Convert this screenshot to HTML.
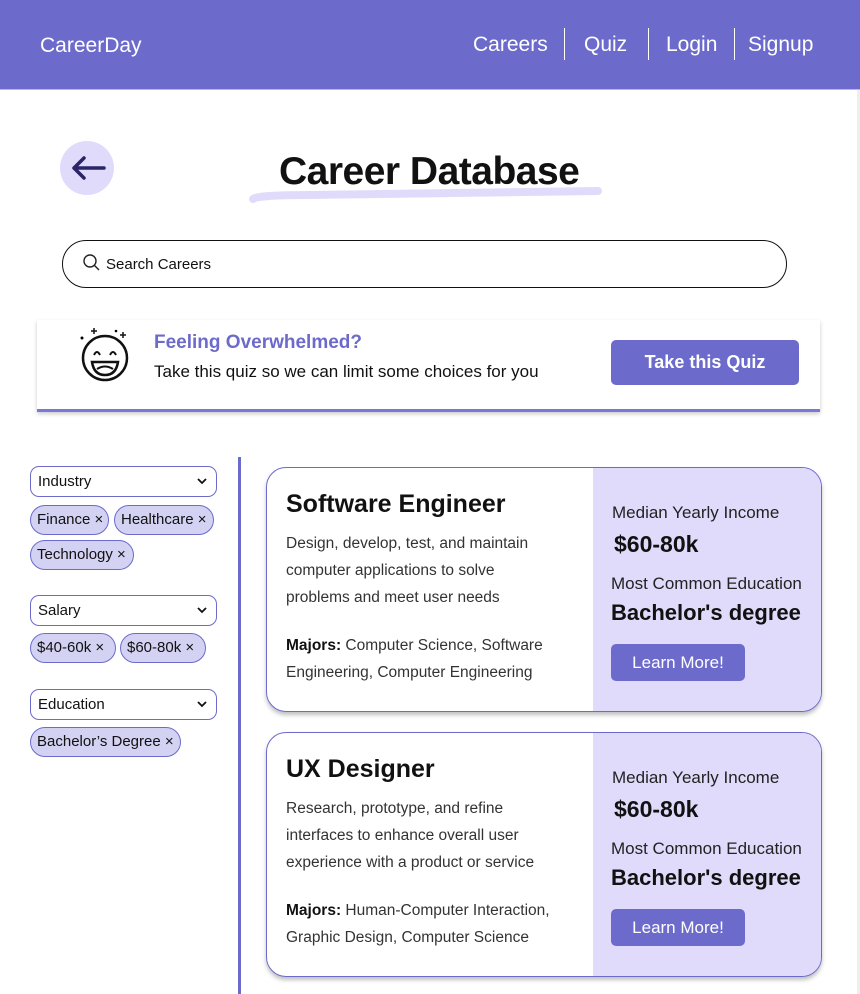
<!DOCTYPE html>
<html><head><meta charset="utf-8"><style>
*{box-sizing:border-box;margin:0;padding:0}
body{width:860px;height:994px;overflow:hidden;background:#fff;font-family:"Liberation Sans",sans-serif;position:relative;color:#111}
.a{position:absolute}
.hdr{left:0;top:0;width:860px;height:90px;background:#6c6bcc;border-bottom:1px solid #b9b6ee}
.nav{color:#fff;font-size:21px;top:33px}
.sep{top:28px;width:1px;height:32px;background:#fff}
.sel{left:30px;width:187px;height:31px;border:1.5px solid #6c6bcc;border-radius:9px;font-size:15px;padding:6px 0 0 7px}
.sel svg{position:absolute;right:8px;top:10px}
.chip{height:30px;border:1.5px solid #6c6bcc;border-radius:15px;background:#d4d2f2;font-size:15px;padding:5px 0 0 6px}
.card{left:266px;width:556px;height:245px;border:1.5px solid #6c6bcc;border-radius:20px;overflow:hidden;box-shadow:0 3px 4px rgba(0,0,0,.25);background:#fff}
.card .r{position:absolute;left:326px;top:0;width:230px;height:100%;background:#e0dbfb}
.t{font-size:25px;font-weight:bold;left:19px;top:22px}
.d{left:19px;font-size:15.5px;line-height:27px;color:#333}
.lm{position:absolute;left:18px;width:134px;height:37px;background:#6c6bcc;color:#fff;border-radius:5px;font-size:17px;text-align:center;line-height:37px}
</style></head><body>
<div class="a hdr"></div>
<div class="a nav" style="left:40px;top:34px">CareerDay</div>
<div class="a nav" style="left:473px">Careers</div>
<div class="a sep" style="left:564px"></div>
<div class="a nav" style="left:584px">Quiz</div>
<div class="a sep" style="left:648px"></div>
<div class="a nav" style="left:666px">Login</div>
<div class="a sep" style="left:734px"></div>
<div class="a nav" style="left:748px">Signup</div>
<div class="a" style="left:857px;top:90px;width:3px;height:904px;background:#eee"></div>

<div class="a" style="left:60px;top:141px;width:54px;height:54px;border-radius:50%;background:#e0dbfb"></div>
<svg class="a" style="left:70px;top:155px" width="36" height="26"><path d="M34 13H4M14 3L4 13l10 10" stroke="#2a2566" stroke-width="3.5" fill="none" stroke-linecap="round" stroke-linejoin="round"/></svg>
<svg class="a" style="left:248px;top:183px" width="356" height="22"><path d="M5 16Q10 12 60 12L350 8" stroke="#e0dbfb" stroke-width="8" fill="none" stroke-linecap="round"/></svg>
<div class="a" style="left:279px;top:150px;font-size:39px;font-weight:bold;letter-spacing:-0.5px">Career Database</div>

<div class="a" style="left:62px;top:240px;width:725px;height:48px;border:1.5px solid #111;border-radius:24px"></div>
<svg class="a" style="left:82px;top:253px" width="20" height="20"><circle cx="8" cy="8" r="6" stroke="#222" stroke-width="1.4" fill="none"/><path d="M12.5 12.5L17 17" stroke="#222" stroke-width="1.4"/></svg>
<div class="a" style="left:106px;top:256px;font-size:15px">Search Careers</div>

<div class="a" style="left:37px;top:320px;width:783px;height:92px;background:#fff;box-shadow:0 2px 4px rgba(0,0,0,.2);border-bottom:3px solid #7a78d6"></div>
<svg class="a" style="left:76px;top:326px" width="60" height="62"><circle cx="29" cy="32" r="22" stroke="#111" stroke-width="2.5" fill="none"/><path d="M18 29q3-6 6 0M34 29q3-6 6 0" stroke="#111" stroke-width="2" fill="none"/><path d="M16 36h26q-2 13-13 13t-13-13z" stroke="#111" stroke-width="2.5" fill="none"/><path d="M21 43q8-5 16 0" stroke="#111" stroke-width="2" fill="none"/><path d="M18 2v6M15 5h6M47 6v6M44 9h6" stroke="#111" stroke-width="1.5"/><circle cx="6" cy="12" r="1.5"/><circle cx="40" cy="5" r="1.3"/></svg>
<div class="a" style="left:154px;top:332px;font-size:19px;font-weight:bold;color:#6c6bcc">Feeling Overwhelmed?</div>
<div class="a" style="left:154px;top:362px;font-size:17px">Take this quiz so we can limit some choices for you</div>
<div class="a" style="left:611px;top:340px;width:188px;height:45px;background:#6c6bcc;border-radius:5px;color:#fff;font-size:18px;font-weight:bold;text-align:center;line-height:45px">Take this Quiz</div>

<div class="a" style="left:238px;top:457px;width:3px;height:537px;background:#6c6bcc"></div>
<div class="a sel" style="top:466px">Industry<svg width="12" height="8"><path d="M2 2l4 4 4-4" stroke="#111" stroke-width="1.8" fill="none"/></svg></div>
<div class="a chip" style="left:30px;top:505px;width:79px">Finance ×</div>
<div class="a chip" style="left:114px;top:505px;width:100px">Healthcare ×</div>
<div class="a chip" style="left:30px;top:540px;width:104px">Technology ×</div>
<div class="a sel" style="top:595px">Salary<svg width="12" height="8"><path d="M2 2l4 4 4-4" stroke="#111" stroke-width="1.8" fill="none"/></svg></div>
<div class="a chip" style="left:30px;top:633px;width:86px">$40-60k ×</div>
<div class="a chip" style="left:120px;top:633px;width:86px">$60-80k ×</div>
<div class="a sel" style="top:689px">Education<svg width="12" height="8"><path d="M2 2l4 4 4-4" stroke="#111" stroke-width="1.8" fill="none"/></svg></div>
<div class="a chip" style="left:30px;top:727px;width:151px">Bachelor’s Degree ×</div>

<div class="a card" style="top:467px"><div class="r">
<div class="a" style="left:19px;top:35px;font-size:17px;color:#222">Median Yearly Income</div>
<div class="a" style="left:21px;top:63px;font-size:23px;font-weight:bold">$60-80k</div>
<div class="a" style="left:18px;top:106px;font-size:17px;color:#222">Most Common Education</div>
<div class="a" style="left:18px;top:132px;font-size:22px;font-weight:bold">Bachelor's degree</div>
<div class="lm" style="top:176px">Learn More!</div></div>
<div class="a t">Software Engineer</div>
<div class="a d" style="top:62px">Design, develop, test, and maintain<br>computer applications to solve<br>problems and meet user needs</div>
<div class="a d" style="top:164px"><b style="color:#111">Majors:</b> Computer Science, Software<br>Engineering, Computer Engineering</div>
</div>

<div class="a card" style="top:732px"><div class="r">
<div class="a" style="left:19px;top:35px;font-size:17px;color:#222">Median Yearly Income</div>
<div class="a" style="left:21px;top:63px;font-size:23px;font-weight:bold">$60-80k</div>
<div class="a" style="left:18px;top:106px;font-size:17px;color:#222">Most Common Education</div>
<div class="a" style="left:18px;top:132px;font-size:22px;font-weight:bold">Bachelor's degree</div>
<div class="lm" style="top:176px">Learn More!</div></div>
<div class="a t">UX Designer</div>
<div class="a d" style="top:62px">Research, prototype, and refine<br>interfaces to enhance overall user<br>experience with a product or service</div>
<div class="a d" style="top:164px"><b style="color:#111">Majors:</b> Human-Computer Interaction,<br>Graphic Design, Computer Science</div>
</div>
</body></html>
